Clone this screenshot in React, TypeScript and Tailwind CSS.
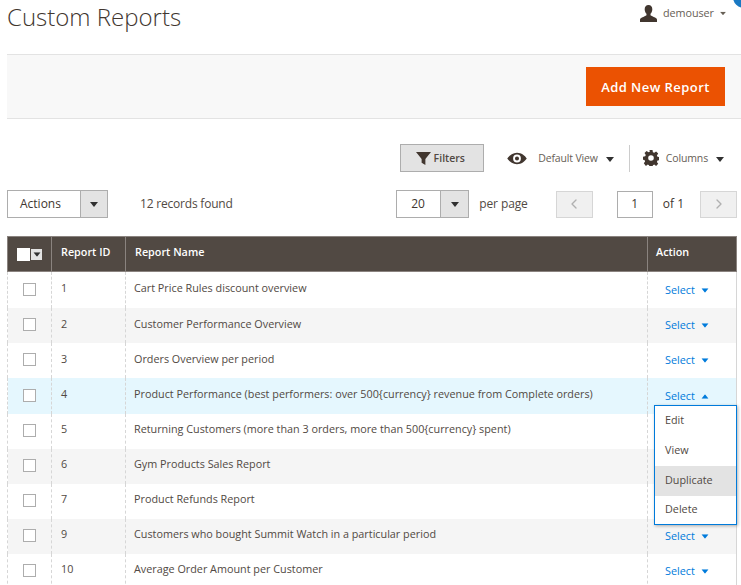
import { ChevronLeft, ChevronRight } from "lucide-react";
import type { ReactNode } from "react";

const rows = [
  { id: "1", name: "Cart Price Rules discount overview" },
  { id: "2", name: "Customer Performance Overview" },
  { id: "3", name: "Orders Overview per period" },
  { id: "4", name: "Product Performance (best performers: over 500{currency} revenue from Complete orders)" },
  { id: "5", name: "Returning Customers (more than 3 orders, more than 500{currency} spent)" },
  { id: "6", name: "Gym Products Sales Report" },
  { id: "7", name: "Product Refunds Report" },
  { id: "9", name: "Customers who bought Summit Watch in a particular period" },
  { id: "10", name: "Average Order Amount per Customer" },
];

// rows whose Select link sits behind the open menu
const underMenu = ["5", "6", "7"];

const Caret = ({ up = false, className = "" }: { up?: boolean; className?: string }) => (
  <svg viewBox="0 0 10 6" className={`h-[5px] w-[8px] ${className}`} fill="currentColor">
    <path d={up ? "M5 0l5 6H0z" : "M0 0h10L5 6z"} />
  </svg>
);

const SelectBox = ({ children, width, arrow }: { children: ReactNode; width: string; arrow: string }) => (
  <div className={`flex h-[28px] border border-[#adadad] bg-white text-[12px] text-[#41362f] ${width}`}>
    <div className="flex flex-1 items-center pl-3">{children}</div>
    <div className={`flex items-center justify-center border-l border-[#adadad] bg-[#e3e3e3] text-[#303030] ${arrow}`}>
      <Caret />
    </div>
  </div>
);

export default function App() {
  return (
    <div className="relative h-[585px] w-[741px] overflow-hidden bg-white font-['Open_Sans',sans-serif] text-[#303030]">
      <div className="absolute -right-[14px] -top-[14px] size-[22px] rounded-full bg-[#1979c3]" />

      <header className="flex h-[54px] justify-between pl-[7px] pr-[14px]">
        <h1 className="text-[24px] font-light leading-[33px] text-[#41362f]">Custom Reports</h1>
        <div className="flex h-[27px] items-center text-[10.8px] text-[#676056]">
          <svg viewBox="0 0 16 16" className="mr-[6px] size-[17px] text-[#41362f]" fill="currentColor">
            <path d="M8 0c2.3 0 3.6 1.7 3.6 3.9 0 1.7-.7 3.4-1.7 4.4v1.2c0 .6 1.2 1 3 1.7 1.9.7 3.1 1.3 3.1 2.6V16H0v-2.200c0-1.300 1.200-1.900 3.100-2.600 1.800-.7 3-1.100 3-1.700V8.300C5.100 7.300 4.400 5.600 4.400 3.900 4.400 1.700 5.700 0 8 0z" />
          </svg>
          <span className="tracking-[-0.05px]">demouser</span>
          <Caret className="ml-[5px] scale-75" />
        </div>
      </header>

      <div className="ml-[7px] flex h-[65px] items-center justify-end border-y border-[#e3e3e3] bg-[#f8f8f8] pr-[16px]">
        <button className="h-[39px] w-[139px] bg-[#eb5202] pt-[2px] text-[13px] font-semibold tracking-[0.45px] text-white">
          Add New Report
        </button>
      </div>

      <div className="mt-[25px] flex h-[28px] items-center justify-end pr-[17px] text-[10.5px]">
        <button className="mr-[23px] flex h-[28px] w-[84px] items-center justify-center border border-[#adadad] bg-[#e3e3e3] pr-[4px] pt-[1px] font-semibold text-[#514943]">
          <svg viewBox="0 0 16 16" className="mr-[3px] size-[15px] text-[#41362f]" fill="currentColor">
            <path d="M0 1h16L10 8.500V15l-4-2.500V8.500z" />
          </svg>
          Filters
        </button>
        <svg viewBox="0 0 24 16" className="mr-[11px] h-[13px] w-[20px] text-[#41362f]" fill="currentColor">
          <path fillRule="evenodd" d="M12 1C6.500 1 2.300 4.500 0 8c2.300 3.500 6.500 7 12 7s9.700-3.500 12-7c-2.300-3.500-6.500-7-12-7zm0 2.200a4.800 4.800 0 1 1 0 9.600 4.800 4.800 0 0 1 0-9.600zm0 2.300a2.500 2.500 0 1 0 0 5 2.500 2.500 0 0 0 0-5z" />
        </svg>
        <span className="pt-[2px] tracking-[-0.15px] text-[#676056]">Default View</span>
        <Caret className="ml-[8px] mt-[2px] text-[#303030]" />
        <div className="ml-[15px] mr-[13px] h-[27px] w-px bg-[#cccccc]" />
        <svg viewBox="0 0 16 16" className="mr-[7px] size-[16px] text-[#41362f]" fill="currentColor">
          <path fillRule="evenodd" d="M6.500 0h3l.4 2.200 1.300.6L13.100 1.500l2.100 2.100-1.300 1.900.6 1.300 2.200.4v3l-2.200.4-.6 1.300 1.300 1.900-2.100 2.100-1.900-1.300-1.300.6-.4 2.200h-3l-.4-2.200-1.300-.6-1.900 1.300L.8 13.300l1.300-1.900-.6-1.300L0 9.700v-3l2.200-.4.6-1.300L1.500 3.100 3.600 1l1.900 1.300 1.300-.6zM8 5.200a2.800 2.800 0 1 0 0 5.600 2.800 2.800 0 0 0 0-5.600z" />
        </svg>
        <span className="pt-[2px] tracking-[-0.15px] text-[#676056]">Columns</span>
        <Caret className="ml-[8px] mt-[2px] text-[#303030]" />
      </div>

      <div className="mt-[18px] flex h-[28px] items-center pl-[7px] pr-[4px] text-[12px] text-[#41362f]">
        <SelectBox width="w-[101px]" arrow="w-[27px]">Actions</SelectBox>
        <span className="ml-[32px] tracking-[-0.2px] text-[#514943]">12 records found</span>
        <div className="ml-auto flex items-center">
          <SelectBox width="w-[73px]" arrow="w-[28px]">
            <span className="pl-[2px]">20</span>
          </SelectBox>
          <span className="ml-[10px] tracking-[-0.1px] text-[#514943]">per page</span>
          <button className="ml-[28px] flex h-[27px] w-[37px] items-center justify-center border border-[#d6d6d6] bg-[#f0f0f0] text-[#b0b0b0]">
            <ChevronLeft size={16} />
          </button>
          <div className="ml-[24px] flex h-[27px] w-[36px] items-center justify-center border border-[#adadad] bg-white">1</div>
          <span className="ml-[10px]">of 1</span>
          <button className="ml-[16px] flex h-[27px] w-[37px] items-center justify-center border border-[#d6d6d6] bg-[#f0f0f0] text-[#b0b0b0]">
            <ChevronRight size={16} />
          </button>
        </div>
      </div>

      <table className="ml-[7px] mt-[18px] w-[730px] table-fixed border-collapse text-[10.8px]">
        <thead>
          <tr className="h-[35px] bg-[#514943] text-left text-white">
            <th className="w-[44px] border border-[#8a837f] p-0">
              <div className="ml-[9px] flex h-[13px] w-[26px] bg-white">
                <div className="flex-1" />
                <div className="flex w-[13px] items-center justify-center border border-[#514943] bg-[#e3e3e3] text-[#303030]">
                  <Caret className="scale-90" />
                </div>
              </div>
            </th>
            <th className="w-[74px] border border-[#8a837f] pb-[3px] pl-[9px] font-semibold">Report ID</th>
            <th className="w-[522px] border border-[#8a837f] pb-[3px] pl-[9px] font-semibold">Report Name</th>
            <th className="border border-[#8a837f] pb-[3px] pl-[8px] font-semibold">Action</th>
          </tr>
        </thead>
        <tbody>
          {rows.map((row, i) => {
            const open = row.id === "4";
            const bg = open ? "bg-[#e5f7fe]" : i % 2 === 1 ? "bg-[#f5f5f5]" : "bg-white";
            const pad = i === 1 || i === 2 ? "pb-[1px]" : "pb-[3px]";
            return (
              <tr key={row.id} className={`${i === 0 || open ? "h-[36px]" : "h-[35px]"} ${bg}`}>
                <td className="border-x border-dashed border-[#d6d6d6] p-0 pb-[1px] pl-[15px]">
                  <div className="size-[13px] border border-[#adadad] bg-white" />
                </td>
                <td className={`border-r border-dashed border-[#d6d6d6] pl-[9px] text-[#514943] ${pad}`}>{row.id}</td>
                <td className={`border-r border-dashed border-[#d6d6d6] pl-[8px] text-[#514943] ${pad}`}>{row.name}</td>
                <td className="relative border-r border-[#d6d6d6] pl-[17px] pt-[1px] text-[#007bdb]">
                  {!underMenu.includes(row.id) && (
                    <div className="flex items-center">
                      Select
                      <Caret up={open} className="ml-[6px] scale-90" />
                    </div>
                  )}
                  {open && (
                    <ul className="absolute left-[6px] top-[27px] z-10 w-[83px] border border-[#007bdb] bg-white text-[#514943] shadow-[1px_1px_3px_rgba(0,0,0,0.3)]">
                      <li className="flex h-[30px] items-center pl-[10px]">Edit</li>
                      <li className="flex h-[30px] items-center pl-[10px]">View</li>
                      <li className="flex h-[30px] items-center bg-[#e3e3e3] pl-[10px]">Duplicate</li>
                      <li className="flex h-[28px] items-center pl-[10px]">Delete</li>
                    </ul>
                  )}
                </td>
              </tr>
            );
          })}
        </tbody>
      </table>
    </div>
  );
}
